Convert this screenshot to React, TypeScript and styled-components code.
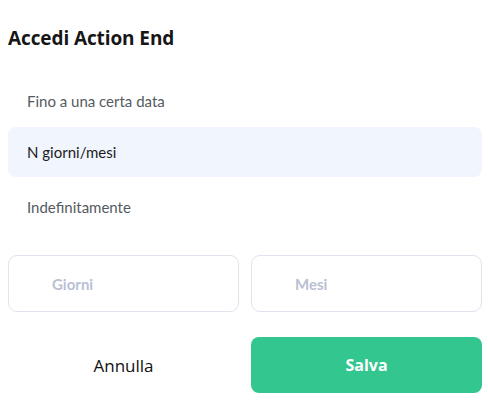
import React from "react";
import styled, { createGlobalStyle } from "styled-components";

const Global = createGlobalStyle`
  html, body { margin: 0; padding: 0; background: #ffffff; }
  body { font-family: Lato, "Noto Sans", sans-serif; }
  * { box-sizing: border-box; }
`;

const Panel = styled.div`
  width: 488px;
  padding: 0 6px 0 8px;
  display: flex;
  flex-direction: column;
`;

const Title = styled.h2`
  margin: 26px 0 0;
  height: 24px;
  line-height: 24px;
  font-family: "Open Sans", Lato, sans-serif;
  font-weight: 700;
  font-size: 19px;
  letter-spacing: -0.1px;
  color: #161616;
`;

const Options = styled.div`
  margin-top: 26px;
  display: flex;
  flex-direction: column;
`;

const Option = styled.div<{ $active?: boolean; $gap?: number }>`
  height: 50px;
  margin-top: ${(p) => p.$gap ?? 0}px;
  padding-left: 19px;
  display: flex;
  align-items: center;
  border-radius: 8px;
  font-size: 15px;
  color: ${(p) => (p.$active ? "#1c1c1c" : "#555a60")};
  background: ${(p) => (p.$active ? "#f0f5fe" : "transparent")};
`;

const Row = styled.div<{ $top: number }>`
  margin-top: ${(p) => p.$top}px;
  display: grid;
  grid-template-columns: 1fr 1fr;
  column-gap: 12px;
`;

const Input = styled.input`
  height: 57px;
  width: 100%;
  border: 1px solid #e2e2ee;
  border-radius: 9px;
  padding: 0 0 0 43px;
  font-family: Lato, sans-serif;
  font-size: 15px;
  font-weight: 700;
  color: #333;
  outline: none;
  &::placeholder { color: #b9c0d4; }
`;

const Button = styled.button<{ $primary?: boolean }>`
  height: 56px;
  border: none;
  border-radius: 8px;
  font-family: "Open Sans", Lato, sans-serif;
  font-size: ${(p) => (p.$primary ? 16 : 17)}px;
  font-weight: ${(p) => (p.$primary ? 700 : 500)};
  color: ${(p) => (p.$primary ? "#ffffff" : "#111111")};
  background: ${(p) => (p.$primary ? "#33c68e" : "transparent")};
  cursor: pointer;
`;

export default function App() {
  return (
    <>
      <Global />
      <Panel>
        <Title>Accedi Action End</Title>
        <Options>
          <Option>Fino a una certa data</Option>
          <Option $active $gap={1}>N giorni/mesi</Option>
          <Option $gap={5}>Indefinitamente</Option>
        </Options>
        <Row $top={23}>
          <Input placeholder="Giorni" />
          <Input placeholder="Mesi" />
        </Row>
        <Row $top={25}>
          <Button>Annulla</Button>
          <Button $primary>Salva</Button>
        </Row>
      </Panel>
    </>
  );
}
